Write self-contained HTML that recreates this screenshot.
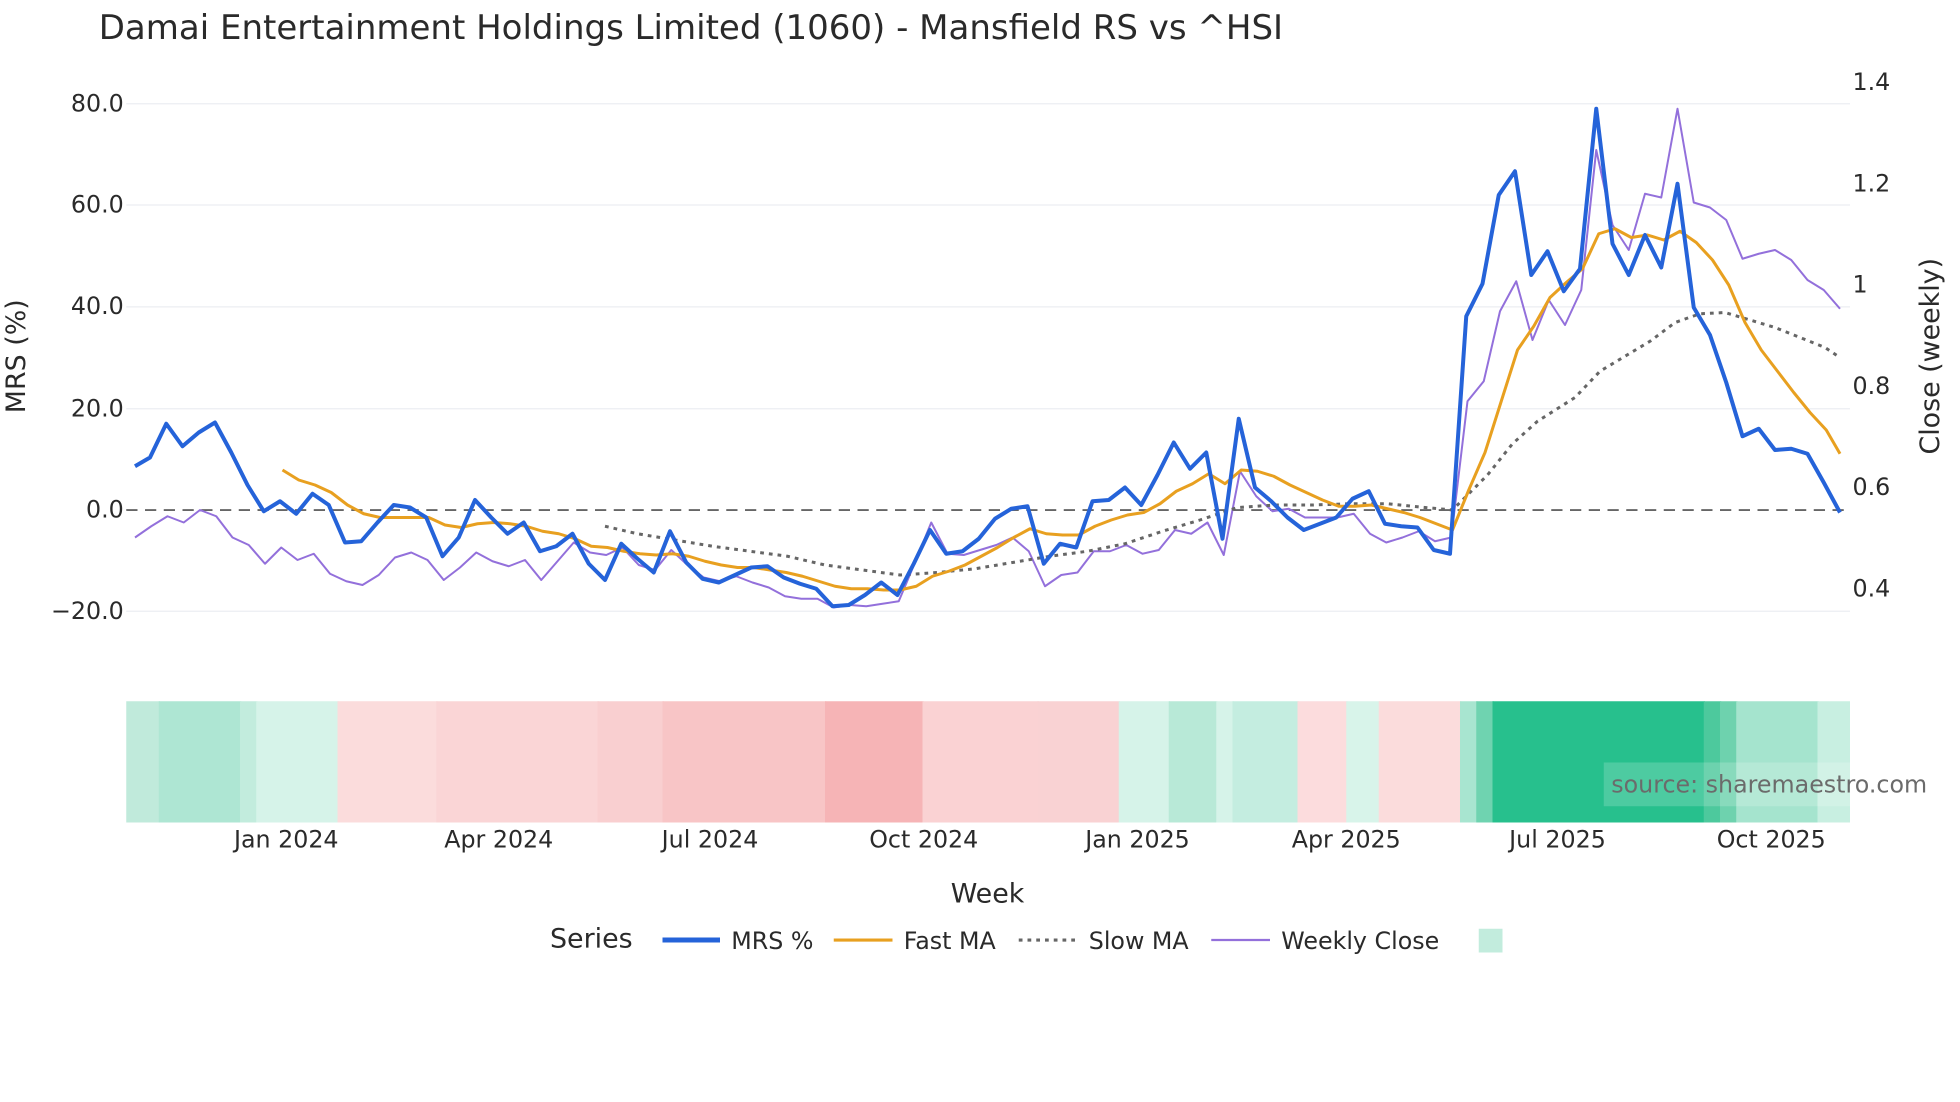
<!DOCTYPE html>
<html><head><meta charset="utf-8"><style>
html,body{margin:0;padding:0;background:#fff;}
svg{display:block;}
text{font-family:"DejaVu Sans","Liberation Sans",sans-serif;fill:#2a2a2a;}
</style></head><body>
<svg width="1960" height="1102" viewBox="0 0 1568 881.6" xmlns="http://www.w3.org/2000/svg">
<rect width="1568" height="882" fill="#fff"/>
<text x="79" y="31" font-size="27.2">Damai Entertainment Holdings Limited (1060) - Mansfield RS vs ^HSI</text>
<g stroke="#eceef2" stroke-width="1">
<line x1="101" x2="1480" y1="83" y2="83"/><line x1="101" x2="1480" y1="164" y2="164"/>
<line x1="101" x2="1480" y1="245.5" y2="245.5"/><line x1="101" x2="1480" y1="327" y2="327"/>
<line x1="101" x2="1480" y1="489" y2="489"/>
</g>
<g font-size="19" text-anchor="end">
<text x="99" y="89">80.0</text><text x="99" y="170">60.0</text><text x="99" y="251">40.0</text>
<text x="99" y="333">20.0</text><text x="99" y="414">0.0</text><text x="99" y="495">−20.0</text>
</g>
<g font-size="19">
<text x="1482" y="72">1.4</text><text x="1482" y="153">1.2</text><text x="1482" y="234">1</text>
<text x="1482" y="315">0.8</text><text x="1482" y="396">0.6</text><text x="1482" y="477">0.4</text>
</g>
<text font-size="21.5" transform="translate(20,285) rotate(-90)" text-anchor="middle">MRS (%)</text>
<text font-size="21.5" transform="translate(1551,285) rotate(-90)" text-anchor="middle">Close (weekly)</text>
<line x1="101" x2="1480" y1="408" y2="408" stroke="#666" stroke-width="1.5" stroke-dasharray="9,6"/>
<g fill="none" stroke-linejoin="round">
<polyline stroke="#9370db" stroke-width="1.6" points="108,430 121,421 134,413 147,418 160,408 173,413 186,430 199,436 212,451 225,438 238,448 251,443 264,459 277,465 290,468 303,460 316,446 329,442 342,448 355,464 368,454 381,442 394,449 407,453 420,448 433,464 446,449 459,434 472,442 485,444 498,438 511,452 524,456 537,440 550,452 563,462 576,465 589,461 602,466 615,470 628,477 641,479 654,479 667,486 680,484 693,485 706,483 719,481 732,450 745,418 758,443 771,444 784,440 797,436 810,430 823,441 836,469 849,460 862,458 875,441 888,441 901,436 914,443 927,440 940,424 953,427 966,418 979,444 992,377 1005,397 1018,409 1031,407 1044,414 1057,414 1070,414 1083,411 1096,427 1109,434 1122,430 1135,425 1148,433 1161,430 1174,321 1187,305 1200,249 1213,225 1226,272 1239,240 1252,260 1265,232 1277,120 1290,180 1303,200 1316,155 1329,158 1342,87 1355,162 1368,166 1381,176 1394,207 1407,203 1420,200 1433,208 1446,224 1459,232 1472,247"/>
<polyline stroke="#666" stroke-width="2.4" stroke-dasharray="3,4" points="484,421 510,427 540,432 570,437 600,441 630,445 660,452 690,456 720,460 750,458 780,455 810,450 840,445 870,441 900,435 930,425 960,416 990,406 1020,404 1050,404 1080,403 1110,403 1140,406 1162,408 1175,395 1190,380 1210,355 1230,337 1260,318 1280,297 1300,285 1320,273 1340,258 1360,251 1380,250 1400,256 1420,262 1440,270 1460,278 1472,286"/>
<polyline stroke="#e8a020" stroke-width="2.4" points="226,376 239,384 252,388 265,394 278,404 291,411 304,414 317,414 330,414 343,414 356,420 369,422 382,419 395,418 408,419 421,421 434,425 447,427 460,431 473,437 486,438 499,441 512,443 525,444 538,443 551,445 564,449 577,452 590,454 603,454 616,456 629,458 642,461 655,465 668,469 681,471 694,471 707,472 720,472 733,469 746,461 759,457 772,452 785,445 798,438 811,430 824,423 837,427 850,428 863,428 876,421 889,416 902,412 915,410 928,403 941,393 954,387 967,379 980,387 993,376 1006,377 1019,381 1032,388 1045,394 1058,400 1071,405 1084,405 1097,404 1110,407 1123,410 1136,414 1149,419 1162,424 1175,392 1188,362 1201,321 1214,280 1227,261 1240,238 1253,226 1266,215 1279,187 1292,183 1305,190 1318,188 1331,192 1344,185 1357,194 1370,208 1383,228 1396,258 1409,280 1422,297 1435,314 1448,330 1461,344 1472,363"/>
<polyline stroke="#2563d9" stroke-width="3.2" points="108,373 120,366 133,339 146,357 159,346 172,338 185,362 198,388 211,409 224,401 237,411 250,395 263,404 276,434 289,433 302,418 315,404 328,406 341,414 354,445 367,430 380,400 393,414 406,427 419,418 432,441 445,437 458,427 471,451 484,464 497,435 510,447 523,458 536,425 549,450 562,463 575,466 588,460 601,454 614,453 627,462 640,467 653,471 666,485 679,484 692,476 705,466 718,476 731,451 744,424 757,443 770,441 783,431 796,415 809,407 822,405 835,451 848,435 861,438 874,401 887,400 900,390 913,404 926,380 939,354 952,375 965,362 978,431 991,335 1004,390 1017,401 1030,414 1043,424 1056,419 1069,414 1082,399 1095,393 1108,419 1121,421 1134,422 1147,440 1160,443 1173,253 1186,227 1199,156 1212,137 1225,220 1238,201 1251,233 1264,215 1277,87 1290,195 1303,220 1316,188 1329,214 1342,147 1355,246 1368,268 1381,306 1394,349 1407,343 1420,360 1433,359 1446,363 1459,386 1472,410"/>
</g>
<g>
<rect x="101" y="561" width="27" height="97" fill="#c0eadb"/>
<rect x="127" y="561" width="66" height="97" fill="#aee6d3"/>
<rect x="192" y="561" width="14" height="97" fill="#c2ecdd"/>
<rect x="205" y="561" width="66" height="97" fill="#d6f3e9"/>
<rect x="270" y="561" width="80" height="97" fill="#fbdcdc"/>
<rect x="349" y="561" width="130" height="97" fill="#fad5d6"/>
<rect x="478" y="561" width="53" height="97" fill="#f9cfd0"/>
<rect x="530" y="561" width="131" height="97" fill="#f8c5c6"/>
<rect x="660" y="561" width="79" height="97" fill="#f6b4b6"/>
<rect x="738" y="561" width="93" height="97" fill="#fad2d3"/>
<rect x="830" y="561" width="66" height="97" fill="#f9d2d3"/>
<rect x="895" y="561" width="41" height="97" fill="#d6f3e9"/>
<rect x="935" y="561" width="39" height="97" fill="#b8e9d7"/>
<rect x="973" y="561" width="14" height="97" fill="#d6f3e9"/>
<rect x="986" y="561" width="53" height="97" fill="#c4ede0"/>
<rect x="1038" y="561" width="40" height="97" fill="#fcdcdd"/>
<rect x="1077" y="561" width="27" height="97" fill="#d8f4ea"/>
<rect x="1103" y="561" width="66" height="97" fill="#fbdcdc"/>
<rect x="1168" y="561" width="14" height="97" fill="#a8e5d0"/>
<rect x="1181" y="561" width="14" height="97" fill="#6fd3b0"/>
<rect x="1194" y="561" width="170" height="97" fill="#27c08d"/>
<rect x="1363" y="561" width="14" height="97" fill="#4dc99d"/>
<rect x="1376" y="561" width="14" height="97" fill="#6ed2ae"/>
<rect x="1389" y="561" width="66" height="97" fill="#a5e4ce"/>
<rect x="1454" y="561" width="26" height="97" fill="#c8efe1"/>
</g>
<rect x="1283" y="610" width="200" height="35" fill="#ffffff" fill-opacity="0.18"/>
<text x="1289" y="634" font-size="19" style="fill:#6b6b6b">source: sharemaestro.com</text>
<g font-size="19" text-anchor="middle">
<text x="229" y="678">Jan 2024</text><text x="399" y="678">Apr 2024</text><text x="568" y="678">Jul 2024</text>
<text x="739" y="678">Oct 2024</text><text x="910" y="678">Jan 2025</text><text x="1077" y="678">Apr 2025</text>
<text x="1246" y="678">Jul 2025</text><text x="1417" y="678">Oct 2025</text>
</g>
<text x="790" y="722" font-size="21.5" text-anchor="middle">Week</text>
<text x="440" y="758" font-size="21.5">Series</text>
<line x1="530" x2="576" y1="752" y2="752" stroke="#2563d9" stroke-width="4"/>
<text x="585" y="759" font-size="19">MRS %</text>
<line x1="667" x2="714" y1="752" y2="752" stroke="#e8a020" stroke-width="2.5"/>
<text x="723" y="759" font-size="19">Fast MA</text>
<line x1="815" x2="860" y1="752" y2="752" stroke="#666" stroke-width="2.5" stroke-dasharray="3,4"/>
<text x="871" y="759" font-size="19">Slow MA</text>
<line x1="969" x2="1016" y1="752" y2="752" stroke="#9370db" stroke-width="1.8"/>
<text x="1025" y="759" font-size="19">Weekly Close</text>
<rect x="1183" y="743" width="19" height="19" fill="#c2ecdd"/>
</svg>
</body></html>
